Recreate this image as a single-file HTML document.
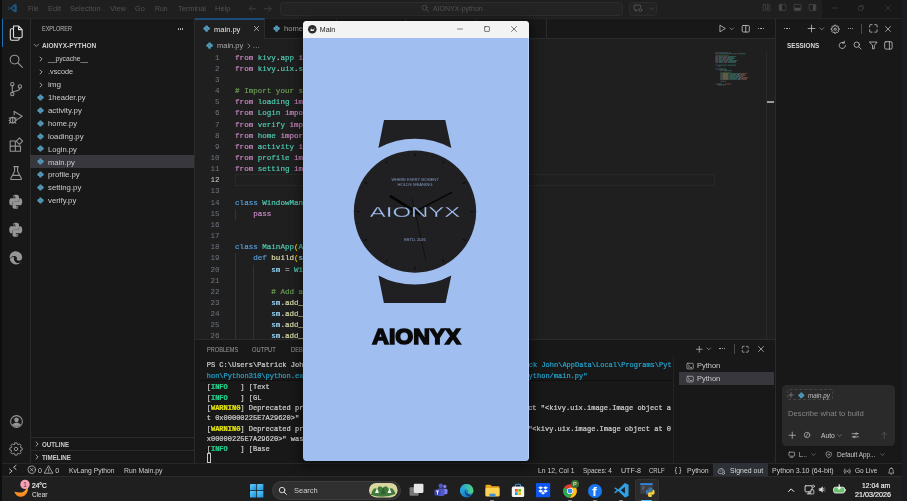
<!DOCTYPE html>
<html lang="en"><head><meta charset="utf-8"><title>main.py - AIONYX-python</title>
<style>
html,body{margin:0;padding:0;background:#1b1b21;}
body{width:907px;height:501px;position:relative;overflow:hidden;font-family:"Liberation Sans",sans-serif;font-size:7.6px;color:#ccc;line-height:1;}
div,span,svg{position:absolute;box-sizing:border-box;white-space:pre;}
svg{overflow:visible}
.t{line-height:13px;height:13px;}
.mono{font-family:"Liberation Mono",monospace;}
.ui{color:#cccccc}
.dim{color:#525252}
.b{font-weight:bold}
.ic{stroke:#c8c8c8;fill:none;stroke-width:1;stroke-linecap:round;stroke-linejoin:round}
.ab svg{stroke:#868686;fill:none;stroke-width:1.5;stroke-linejoin:round;stroke-linecap:round}
/* code colours */
.k{color:#c586c0}.m{color:#4ec9b0}.c{color:#6a9955}.kw{color:#569cd6}.f{color:#dcdcaa}.v{color:#9cdcfe}.p{color:#d4d4d4}.g{color:#ffd700}
.code{-webkit-text-stroke:0.2px;font-family:"Liberation Mono",monospace;font-size:7.55px;line-height:11.15px;height:11.15px;left:40.1px;color:#d4d4d4}
.ln{font-family:"Liberation Mono",monospace;font-size:7.55px;line-height:11.15px;height:11.15px;left:0;width:24.5px;text-align:right;color:#6e7681}
.term{-webkit-text-stroke:0.22px;font-family:"Liberation Mono",monospace;font-size:7px;line-height:10.3px;height:10.3px;color:#cccccc}
.cy{color:#26a0c8}.gr{color:#23d18b;font-weight:bold}.ye{color:#e5e510;font-weight:bold}
</style></head>
<body>
<div id="screen" style="left:0;top:0;width:907px;height:501px;will-change:transform">
<div class="" style="left:0px;top:0px;width:2px;height:501px;background:#0e0e0e;"></div>
<div class="" style="left:902px;top:0px;width:5px;height:501px;background:#1b1b22;"></div>
<div class="" style="left:2px;top:0px;width:900px;height:476px;background:#181818;"></div>
<div class="" style="left:2px;top:0px;width:820px;height:18.5px;background:#1f1f1f;"></div>
<div class="" style="left:2px;top:18px;width:900px;height:1px;background:#252525;"></div>
<svg class="" style="left:7.10px;top:2.50px;width:10.6px;height:10.6px;" viewBox="0 0 16 16"><path d="M11.5 1.5 L5 7.6 L2.3 5.5 L1.3 6 L3.8 8 L1.3 10 L2.3 10.5 L5 8.4 L11.5 14.5 L14.7 13 V3 Z M11.5 5 V11 L7.6 8 Z" fill="#1b5886" stroke="none" fill-rule="evenodd"/></svg>
<span id="t0" class="dim" style="left:27.5px;top:2.10px;line-height:13px;height:13px;font-size:7.7px;transform-origin:0 50%;transform:scaleX(0.8716);">File</span>
<span id="t1" class="dim" style="left:47.8px;top:2.10px;line-height:13px;height:13px;font-size:7.7px;transform-origin:0 50%;transform:scaleX(0.9811);">Edit</span>
<span id="t2" class="dim" style="left:70.3px;top:2.10px;line-height:13px;height:13px;font-size:7.7px;transform-origin:0 50%;transform:scaleX(0.9676);">Selection</span>
<span id="t3" class="dim" style="left:110.1px;top:2.10px;line-height:13px;height:13px;font-size:7.7px;transform-origin:0 50%;transform:scaleX(0.9558);">View</span>
<span id="t4" class="dim" style="left:135.4px;top:2.10px;line-height:13px;height:13px;font-size:7.7px;transform-origin:0 50%;transform:scaleX(0.9449);">Go</span>
<span id="t5" class="dim" style="left:154.7px;top:2.10px;line-height:13px;height:13px;font-size:7.7px;transform-origin:0 50%;transform:scaleX(0.8859);">Run</span>
<span id="t6" class="dim" style="left:177.7px;top:2.10px;line-height:13px;height:13px;font-size:7.7px;transform-origin:0 50%;transform:scaleX(0.9634);">Terminal</span>
<span id="t7" class="dim" style="left:214.5px;top:2.10px;line-height:13px;height:13px;font-size:7.7px;transform-origin:0 50%;transform:scaleX(0.9802);">Help</span>
<svg class="ic" style="left:247.90px;top:3.60px;width:9.6px;height:9.6px;" viewBox="0 0 16 16"><path d="M13.500 8 H2.500 M7 3.500 L2.500 8 L7 12.500" stroke="#484848" stroke-width="1.200"/></svg>
<svg class="ic" style="left:263.20px;top:3.60px;width:9.6px;height:9.6px;" viewBox="0 0 16 16"><path d="M2.500 8 H13.500 M9 3.500 L13.500 8 L9 12.500" stroke="#484848" stroke-width="1.200"/></svg>
<div class="" style="left:280px;top:2px;width:343px;height:13.5px;background:#232323;border:0.8px solid #2c2c2c;border-radius:3.5px;"></div>
<svg class="ic" style="left:421.30px;top:3.90px;width:8.6px;height:8.6px;" viewBox="0 0 16 16"><circle cx="6.800" cy="6.800" r="4.400" stroke="#5a5a5a" stroke-width="1.200"/><path d="M10.100 10.100 L14.200 14.200" stroke="#5a5a5a" stroke-width="1.200"/></svg>
<span id="t8" class="dim" style="left:433px;top:2.00px;line-height:13px;height:13px;font-size:7.6px;transform-origin:0 50%;transform:scaleX(0.9198);">AIONYX-python</span>
<div class="" style="left:629px;top:2px;width:28.2px;height:13.5px;background:#232323;border:0.8px solid #2c2c2c;border-radius:3.5px;"></div>
<svg class="ic" style="left:632.60px;top:3.20px;width:10.2px;height:10.2px;" viewBox="0 0 16 16"><path d="M3 3.2 H10.5 Q12 3.2 12 4.7 V7 M3 3.2 Q1.8 3.2 1.8 4.5 V9.5 Q1.8 10.8 3 10.8 H4 V13 L6.5 10.8 H7.5" stroke="#5e5e5e" stroke-width="1.3"/><circle cx="11.5" cy="11" r="2.3" stroke="#5e5e5e" stroke-width="1.2"/></svg>
<svg class="ic" style="left:648.85px;top:5.75px;width:5.5px;height:5.5px;" viewBox="0 0 16 16"><path d="M2.5 5.5 L8 11 L13.5 5.5" stroke="#5a5a5a" stroke-width="1.6"/></svg>
<svg class="ic" style="left:762.00px;top:3.10px;width:9px;height:9px;" viewBox="0 0 16 16"><rect x="2" y="2.5" width="4.5" height="11" rx="1" stroke="#4a4a4a" stroke-width="1.2"/><rect x="9" y="2.5" width="5" height="4.5" rx="1" stroke="#4a4a4a" stroke-width="1.2"/><rect x="9" y="9" width="5" height="4.5" rx="1" stroke="#4a4a4a" stroke-width="1.2"/></svg>
<svg class="ic" style="left:777.60px;top:3.10px;width:9px;height:9px;" viewBox="0 0 16 16"><rect x="2" y="2.5" width="12" height="11" rx="1.5" stroke="#4a4a4a" stroke-width="1.2"/><rect x="2.6" y="3" width="4.4" height="10" fill="#4a4a4a" stroke="none"/></svg>
<svg class="ic" style="left:792.50px;top:3.10px;width:9px;height:9px;" viewBox="0 0 16 16"><rect x="2" y="2.5" width="12" height="11" rx="1.5" stroke="#4a4a4a" stroke-width="1.2"/><rect x="2.6" y="8.5" width="10.8" height="4.5" fill="#4a4a4a" stroke="none"/></svg>
<svg class="ic" style="left:807.80px;top:3.10px;width:9px;height:9px;" viewBox="0 0 16 16"><rect x="2" y="2.5" width="12" height="11" rx="1.5" stroke="#4a4a4a" stroke-width="1.2"/><rect x="9" y="3" width="4.4" height="10" fill="#4a4a4a" stroke="none"/></svg>
<svg class="ic" style="left:831.30px;top:3.50px;width:8px;height:8px;" viewBox="0 0 16 16"><path d="M2.5 8 H13.5" stroke="#4a4a4a" stroke-width="1.1"/></svg>
<svg class="ic" style="left:857.30px;top:3.80px;width:8px;height:8px;" viewBox="0 0 16 16"><rect x="3" y="5" width="8" height="8" rx="1.5" stroke="#4a4a4a" stroke-width="1.1"/><path d="M5.5 5 V4.3 Q5.5 3 7 3 H11.5 Q13.3 3 13.3 4.6 V9 Q13.3 10.5 12 10.5 H11" stroke="#4a4a4a" stroke-width="1.1"/></svg>
<svg class="ic" style="left:884.40px;top:3.80px;width:8px;height:8px;" viewBox="0 0 16 16"><path d="M3 3 L13 13 M13 3 L3 13" stroke="#4a4a4a" stroke-width="1.1"/></svg>
<div class="" style="left:30px;top:19px;width:1px;height:444px;background:#2b2b2b;"></div>
<div class="" style="left:2px;top:18.8px;width:1.2px;height:28.2px;background:#1f6fb5;"></div>
<svg style="left:7.00px;top:23.70px;width:18.2px;height:18.2px;stroke:#dedede;fill:none;stroke-width:1.45;stroke-linejoin:round;stroke-linecap:round" viewBox="0 0 24 24"><path d="M8.6 2.6 H15.2 L20 7.4 V16.6 Q20 18.2 18.4 18.2 H10.2 Q8.6 18.2 8.6 16.6 Z M15.2 2.6 V7.4 H20"/><path d="M8.6 6.2 H6 Q4.4 6.2 4.4 7.8 V19.6 Q4.4 21.4 6 21.4 H14.4 Q16 21.4 16 19.8 V18.2"/></svg>
<svg style="left:7.00px;top:51.50px;width:18.2px;height:18.2px;stroke:#959595;fill:none;stroke-width:1.45;stroke-linejoin:round;stroke-linecap:round" viewBox="0 0 24 24"><circle cx="10" cy="10" r="5.8"/><path d="M14.2 14.2 L20.3 20.3"/></svg>
<svg style="left:7.00px;top:79.80px;width:18.2px;height:18.2px;stroke:#959595;fill:none;stroke-width:1.45;stroke-linejoin:round;stroke-linecap:round" viewBox="0 0 24 24"><circle cx="7" cy="5.5" r="2.2"/><circle cx="7" cy="18.5" r="2.2"/><circle cx="17" cy="8.5" r="2.2"/><path d="M7 7.7 V16.3 M17 10.7 Q17 14 12 14.5 Q7.5 15 7 16.3"/></svg>
<svg style="left:7.00px;top:107.90px;width:18.2px;height:18.2px;stroke:#959595;fill:none;stroke-width:1.45;stroke-linejoin:round;stroke-linecap:round" viewBox="0 0 24 24"><path d="M9.5 4.5 L20 11 L12 16"/><path d="M9.5 4.5 V9"/><circle cx="7.5" cy="16" r="3.6"/><path d="M7.5 12.4 V19.6 M3 13 L4.6 14.2 M12 13 L10.4 14.2 M2.8 16.5 H3.9 M12.2 16.5 H11.1 M3.3 20 L4.8 18.6 M11.7 20 L10.2 18.6"/></svg>
<svg style="left:7.00px;top:136.30px;width:18.2px;height:18.2px;stroke:#959595;fill:none;stroke-width:1.45;stroke-linejoin:round;stroke-linecap:round" viewBox="0 0 24 24"><path d="M4.2 6.6 H11 V13.4 H17.8 V20.2 H4.2 Z M4.2 13.4 H11 V20.2"/><path d="M16.4 2.6 L20.6 6.8 L16.4 11 L12.2 6.8 Z"/></svg>
<svg style="left:7.00px;top:164.40px;width:18.2px;height:18.2px;stroke:#959595;fill:none;stroke-width:1.45;stroke-linejoin:round;stroke-linecap:round" viewBox="0 0 24 24"><path d="M9 3.5 H15 M10 3.5 V9.5 L5 19 Q4.5 20.5 6 20.5 H18 Q19.5 20.5 19 19 L14 9.5 V3.5 M7 15 H17"/></svg>
<svg style="left:8.35px;top:193.75px;width:15.5px;height:15.5px;stroke:#959595;fill:none;stroke-width:1.45;stroke-linejoin:round;stroke-linecap:round" viewBox="0 0 24 24"><g stroke="none" fill="#959595"><path d="M11.9 1C8 1 8.3 2.7 8.3 2.7v2.9h3.7v.9H5.2S2 6.1 2 11.9s2.8 5.6 2.8 5.6h1.9v-2.7s-.1-2.8 2.8-2.8h4.8s2.7 0 2.7-2.6V4S17.4 1 11.9 1z"/><path transform="rotate(180 12 12)" d="M11.9 1C8 1 8.3 2.7 8.3 2.7v2.9h3.7v.9H5.2S2 6.1 2 11.9s2.8 5.6 2.8 5.6h1.9v-2.7s-.1-2.8 2.8-2.8h4.8s2.7 0 2.7-2.6V4S17.4 1 11.9 1z"/></g><circle cx="10" cy="3.6" r="0.9" fill="#181818" stroke="none"/><circle cx="14" cy="20.4" r="0.9" fill="#181818" stroke="none"/></svg>
<svg style="left:8.35px;top:221.95px;width:15.5px;height:15.5px;stroke:#959595;fill:none;stroke-width:1.45;stroke-linejoin:round;stroke-linecap:round" viewBox="0 0 24 24"><g stroke="none" fill="#959595"><path d="M11.9 1C8 1 8.3 2.7 8.3 2.7v2.9h3.7v.9H5.2S2 6.1 2 11.9s2.8 5.6 2.8 5.6h1.9v-2.7s-.1-2.8 2.8-2.8h4.8s2.7 0 2.7-2.6V4S17.4 1 11.9 1z"/><path transform="rotate(180 12 12)" d="M11.9 1C8 1 8.3 2.7 8.3 2.7v2.9h3.7v.9H5.2S2 6.1 2 11.9s2.8 5.6 2.8 5.6h1.9v-2.7s-.1-2.8 2.8-2.8h4.8s2.7 0 2.7-2.6V4S17.4 1 11.9 1z"/></g><circle cx="10" cy="3.6" r="0.9" fill="#181818" stroke="none"/><circle cx="14" cy="20.4" r="0.9" fill="#181818" stroke="none"/></svg>
<svg style="left:8.35px;top:250.05px;width:15.5px;height:15.5px;stroke:#959595;fill:none;stroke-width:1.45;stroke-linejoin:round;stroke-linecap:round" viewBox="0 0 24 24"><g stroke="none"><path fill="#959595" d="M12 2 A10 10 0 0 1 22 11.5 C22 15 19 16.5 16.5 16.5 C14 16.500 12.800 15.500 13.500 14.500 C14.500 13 14 10.500 11.500 9.500 C8 8.200 4.500 10.500 3 13.500 C1 8 5.500 2 12 2 Z"/><path fill="#959595" d="M3 14.5 C4 11.500 7 10 9.500 11 C8.5 13 9 17 12.500 19.500 C15 21 18.500 20.500 20.800 17.500 C18 23 10 24 5.500 19.500 C4 18 3.200 16.300 3 14.500 Z"/></g></svg>
<svg style="left:7.60px;top:412.70px;width:17px;height:17px;stroke:#959595;fill:none;stroke-width:1.45;stroke-linejoin:round;stroke-linecap:round" viewBox="0 0 24 24"><circle cx="12" cy="12" r="8.3"/><circle cx="12" cy="9.700" r="2.5" fill="#959595"/><path d="M6.800 16.500 Q12 12 17.200 16.500 Q12 21 6.800 16.500 Z" fill="#959595"/></svg>
<svg style="left:8.10px;top:441.40px;width:16px;height:16px;stroke:#959595;fill:none;stroke-width:1.45;stroke-linejoin:round;stroke-linecap:round" viewBox="0 0 24 24"><circle cx="12" cy="12" r="2.600"/><path d="M10.41 2.74 L13.59 2.74 L14.23 5.26 L15.19 5.66 L17.43 4.32 L19.68 6.57 L18.34 8.81 L18.74 9.77 L21.26 10.41 L21.26 13.59 L18.74 14.23 L18.34 15.19 L19.68 17.43 L17.43 19.68 L15.19 18.34 L14.23 18.74 L13.59 21.26 L10.41 21.26 L9.77 18.74 L8.81 18.34 L6.57 19.68 L4.32 17.43 L5.66 15.19 L5.26 14.23 L2.74 13.59 L2.74 10.41 L5.26 9.77 L5.66 8.81 L4.32 6.57 L6.57 4.32 L8.81 5.66 L9.77 5.26 Z"/></svg>
<div class="" style="left:194.3px;top:18.8px;width:0.8px;height:444.4px;background:#2b2b2b;"></div>
<span id="t9" class="ui" style="left:41.8px;top:22.20px;line-height:13px;height:13px;font-size:6.6px;transform-origin:0 50%;transform:scaleX(0.8351);color:#bbbbbb;">EXPLORER</span>
<div style="left:177.55px;top:28.35px;width:1.3px;height:1.3px;border-radius:50%;background:#c8c8c8"></div>
<div style="left:179.85px;top:28.35px;width:1.3px;height:1.3px;border-radius:50%;background:#c8c8c8"></div>
<div style="left:182.15px;top:28.35px;width:1.3px;height:1.3px;border-radius:50%;background:#c8c8c8"></div>
<svg class="ic" style="left:32.75px;top:42.35px;width:6.5px;height:6.5px;" viewBox="0 0 16 16"><path d="M2.5 5.5 L8 11 L13.5 5.5" stroke="#c5c5c5" stroke-width="1.6"/></svg>
<span id="t10" class="ui b" style="left:42px;top:39.30px;line-height:13px;height:13px;font-size:6.6px;transform-origin:0 50%;transform:scaleX(0.9881);color:#cfcfcf">AIONYX-PYTHON</span>
<svg class="ic" style="left:38.20px;top:55.90px;width:6px;height:6px;" viewBox="0 0 16 16"><path d="M5.5 2.5 L11 8 L5.5 13.5" stroke="#cccccc" stroke-width="2"/></svg>
<span id="t11" class="ui" style="left:47.5px;top:52.40px;line-height:13px;height:13px;font-size:7.65px;transform-origin:0 50%;transform:scaleX(0.8819);">__pycache__</span>
<svg class="ic" style="left:38.20px;top:68.79px;width:6px;height:6px;" viewBox="0 0 16 16"><path d="M5.5 2.5 L11 8 L5.5 13.5" stroke="#cccccc" stroke-width="2"/></svg>
<span id="t12" class="ui" style="left:47.5px;top:65.29px;line-height:13px;height:13px;font-size:7.65px;transform-origin:0 50%;transform:scaleX(0.9528);">.vscode</span>
<svg class="ic" style="left:38.20px;top:81.68px;width:6px;height:6px;" viewBox="0 0 16 16"><path d="M5.5 2.5 L11 8 L5.5 13.5" stroke="#cccccc" stroke-width="2"/></svg>
<span id="t13" class="ui" style="left:47.5px;top:78.18px;line-height:13px;height:13px;font-size:7.65px;transform-origin:0 50%;transform:scaleX(1.0640);">img</span>
<svg style="left:36.70px;top:93.87px;width:7px;height:7px" viewBox="0 0 24 24"><g fill="#519aba"><rect x="7" y="1.5" width="10" height="21" rx="3.6"/><rect x="1.5" y="7" width="21" height="10" rx="3.6"/></g><path d="M7 11.300 H12.700 M11.300 12.700 H17" stroke="#1a1a1a" stroke-width="0.900" fill="none" opacity="0.55"/><circle cx="10" cy="4.600" r="1.100" fill="#1a1a1a" opacity="0.7"/><circle cx="14" cy="19.400" r="1.100" fill="#1a1a1a" opacity="0.7"/></svg>
<span id="t14" class="ui" style="left:47.5px;top:91.07px;line-height:13px;height:13px;font-size:7.65px;transform-origin:0 50%;transform:scaleX(0.9944);">1header.py</span>
<svg style="left:36.70px;top:106.76px;width:7px;height:7px" viewBox="0 0 24 24"><g fill="#519aba"><rect x="7" y="1.5" width="10" height="21" rx="3.6"/><rect x="1.5" y="7" width="21" height="10" rx="3.6"/></g><path d="M7 11.300 H12.700 M11.300 12.700 H17" stroke="#1a1a1a" stroke-width="0.900" fill="none" opacity="0.55"/><circle cx="10" cy="4.600" r="1.100" fill="#1a1a1a" opacity="0.7"/><circle cx="14" cy="19.400" r="1.100" fill="#1a1a1a" opacity="0.7"/></svg>
<span id="t15" class="ui" style="left:47.5px;top:103.96px;line-height:13px;height:13px;font-size:7.65px;transform-origin:0 50%;transform:scaleX(1.0247);">activity.py</span>
<svg style="left:36.70px;top:119.65px;width:7px;height:7px" viewBox="0 0 24 24"><g fill="#519aba"><rect x="7" y="1.5" width="10" height="21" rx="3.6"/><rect x="1.5" y="7" width="21" height="10" rx="3.6"/></g><path d="M7 11.300 H12.700 M11.300 12.700 H17" stroke="#1a1a1a" stroke-width="0.900" fill="none" opacity="0.55"/><circle cx="10" cy="4.600" r="1.100" fill="#1a1a1a" opacity="0.7"/><circle cx="14" cy="19.400" r="1.100" fill="#1a1a1a" opacity="0.7"/></svg>
<span id="t16" class="ui" style="left:47.5px;top:116.85px;line-height:13px;height:13px;font-size:7.65px;transform-origin:0 50%;transform:scaleX(0.9893);">home.py</span>
<svg style="left:36.70px;top:132.54px;width:7px;height:7px" viewBox="0 0 24 24"><g fill="#519aba"><rect x="7" y="1.5" width="10" height="21" rx="3.6"/><rect x="1.5" y="7" width="21" height="10" rx="3.6"/></g><path d="M7 11.300 H12.700 M11.300 12.700 H17" stroke="#1a1a1a" stroke-width="0.900" fill="none" opacity="0.55"/><circle cx="10" cy="4.600" r="1.100" fill="#1a1a1a" opacity="0.7"/><circle cx="14" cy="19.400" r="1.100" fill="#1a1a1a" opacity="0.7"/></svg>
<span id="t17" class="ui" style="left:47.5px;top:129.74px;line-height:13px;height:13px;font-size:7.65px;transform-origin:0 50%;transform:scaleX(1.0217);">loading.py</span>
<svg style="left:36.70px;top:145.43px;width:7px;height:7px" viewBox="0 0 24 24"><g fill="#519aba"><rect x="7" y="1.5" width="10" height="21" rx="3.6"/><rect x="1.5" y="7" width="21" height="10" rx="3.6"/></g><path d="M7 11.300 H12.700 M11.300 12.700 H17" stroke="#1a1a1a" stroke-width="0.900" fill="none" opacity="0.55"/><circle cx="10" cy="4.600" r="1.100" fill="#1a1a1a" opacity="0.7"/><circle cx="14" cy="19.400" r="1.100" fill="#1a1a1a" opacity="0.7"/></svg>
<span id="t18" class="ui" style="left:47.5px;top:142.63px;line-height:13px;height:13px;font-size:7.65px;transform-origin:0 50%;transform:scaleX(0.9969);">Login.py</span>
<div class="" style="left:30.1px;top:155px;width:164.2px;height:13px;background:#37373d;"></div>
<svg style="left:36.70px;top:158.32px;width:7px;height:7px" viewBox="0 0 24 24"><g fill="#519aba"><rect x="7" y="1.5" width="10" height="21" rx="3.6"/><rect x="1.5" y="7" width="21" height="10" rx="3.6"/></g><path d="M7 11.300 H12.700 M11.300 12.700 H17" stroke="#1a1a1a" stroke-width="0.900" fill="none" opacity="0.55"/><circle cx="10" cy="4.600" r="1.100" fill="#1a1a1a" opacity="0.7"/><circle cx="14" cy="19.400" r="1.100" fill="#1a1a1a" opacity="0.7"/></svg>
<span id="t19" class="ui" style="left:47.5px;top:155.52px;line-height:13px;height:13px;font-size:7.65px;transform-origin:0 50%;transform:scaleX(1.0013);">main.py</span>
<svg style="left:36.70px;top:171.21px;width:7px;height:7px" viewBox="0 0 24 24"><g fill="#519aba"><rect x="7" y="1.5" width="10" height="21" rx="3.6"/><rect x="1.5" y="7" width="21" height="10" rx="3.6"/></g><path d="M7 11.300 H12.700 M11.300 12.700 H17" stroke="#1a1a1a" stroke-width="0.900" fill="none" opacity="0.55"/><circle cx="10" cy="4.600" r="1.100" fill="#1a1a1a" opacity="0.7"/><circle cx="14" cy="19.400" r="1.100" fill="#1a1a1a" opacity="0.7"/></svg>
<span id="t20" class="ui" style="left:47.5px;top:168.41px;line-height:13px;height:13px;font-size:7.65px;transform-origin:0 50%;transform:scaleX(1.0253);">profile.py</span>
<svg style="left:36.70px;top:184.10px;width:7px;height:7px" viewBox="0 0 24 24"><g fill="#519aba"><rect x="7" y="1.5" width="10" height="21" rx="3.6"/><rect x="1.5" y="7" width="21" height="10" rx="3.6"/></g><path d="M7 11.300 H12.700 M11.300 12.700 H17" stroke="#1a1a1a" stroke-width="0.900" fill="none" opacity="0.55"/><circle cx="10" cy="4.600" r="1.100" fill="#1a1a1a" opacity="0.7"/><circle cx="14" cy="19.400" r="1.100" fill="#1a1a1a" opacity="0.7"/></svg>
<span id="t21" class="ui" style="left:47.5px;top:181.30px;line-height:13px;height:13px;font-size:7.65px;transform-origin:0 50%;transform:scaleX(1.0178);">setting.py</span>
<svg style="left:36.70px;top:196.99px;width:7px;height:7px" viewBox="0 0 24 24"><g fill="#519aba"><rect x="7" y="1.5" width="10" height="21" rx="3.6"/><rect x="1.5" y="7" width="21" height="10" rx="3.6"/></g><path d="M7 11.300 H12.700 M11.300 12.700 H17" stroke="#1a1a1a" stroke-width="0.900" fill="none" opacity="0.55"/><circle cx="10" cy="4.600" r="1.100" fill="#1a1a1a" opacity="0.7"/><circle cx="14" cy="19.400" r="1.100" fill="#1a1a1a" opacity="0.7"/></svg>
<span id="t22" class="ui" style="left:47.5px;top:194.19px;line-height:13px;height:13px;font-size:7.65px;transform-origin:0 50%;transform:scaleX(1.0147);">verify.py</span>
<div class="" style="left:30.1px;top:437.4px;width:164.2px;height:0.8px;background:#2b2b2b;"></div>
<div class="" style="left:30.1px;top:450.1px;width:164.2px;height:0.8px;background:#2b2b2b;"></div>
<svg class="ic" style="left:33.50px;top:441.30px;width:6px;height:6px;" viewBox="0 0 16 16"><path d="M5.5 2.5 L11 8 L5.5 13.5" stroke="#cccccc" stroke-width="2"/></svg>
<span id="t23" class="ui b" style="left:42.1px;top:437.90px;line-height:13px;height:13px;font-size:6.6px;transform-origin:0 50%;transform:scaleX(0.9325);">OUTLINE</span>
<svg class="ic" style="left:33.50px;top:454.10px;width:6px;height:6px;" viewBox="0 0 16 16"><path d="M5.5 2.5 L11 8 L5.5 13.5" stroke="#cccccc" stroke-width="2"/></svg>
<span id="t24" class="ui b" style="left:42.1px;top:450.70px;line-height:13px;height:13px;font-size:6.6px;transform-origin:0 50%;transform:scaleX(0.9421);">TIMELINE</span>
<div class="" style="left:195px;top:19px;width:580px;height:320px;background:#1f1f1f;"></div>
<div class="" style="left:195px;top:19px;width:580px;height:19px;background:#181818;"></div>
<div class="" style="left:195px;top:38px;width:580px;height:1px;background:#2b2b2b;"></div>
<div class="" style="left:195px;top:18px;width:70px;height:21px;background:#1f1f1f;border-top:2px solid #194c76;border-right:1px solid #2b2b2b;"></div>
<svg style="left:202.60px;top:25.10px;width:7.2px;height:7.2px" viewBox="0 0 24 24"><g fill="#519aba"><rect x="7" y="1.5" width="10" height="21" rx="3.6"/><rect x="1.5" y="7" width="21" height="10" rx="3.6"/></g><path d="M7 11.300 H12.700 M11.300 12.700 H17" stroke="#1a1a1a" stroke-width="0.900" fill="none" opacity="0.55"/><circle cx="10" cy="4.600" r="1.100" fill="#1a1a1a" opacity="0.7"/><circle cx="14" cy="19.400" r="1.100" fill="#1a1a1a" opacity="0.7"/></svg>
<span id="t25" class="ui" style="left:214px;top:22.90px;line-height:13px;height:13px;font-size:7.65px;transform-origin:0 50%;transform:scaleX(0.9863);color:#e6e6e6">main.py</span>
<svg class="ic" style="left:253.10px;top:25.30px;width:7px;height:7px;" viewBox="0 0 16 16"><path d="M3 3 L13 13 M13 3 L3 13" stroke="#e0e0e0" stroke-width="1.5"/></svg>
<svg style="left:272.90px;top:25.10px;width:7.2px;height:7.2px" viewBox="0 0 24 24"><g fill="#519aba"><rect x="7" y="1.5" width="10" height="21" rx="3.6"/><rect x="1.5" y="7" width="21" height="10" rx="3.6"/></g><path d="M7 11.300 H12.700 M11.300 12.700 H17" stroke="#1a1a1a" stroke-width="0.900" fill="none" opacity="0.55"/><circle cx="10" cy="4.600" r="1.100" fill="#1a1a1a" opacity="0.7"/><circle cx="14" cy="19.400" r="1.100" fill="#1a1a1a" opacity="0.7"/></svg>
<span id="t26" class="ui" style="left:283.9px;top:22.40px;line-height:13px;height:13px;font-size:7.65px;color:#9d9d9d">home.py</span>
<div class="" style="left:335.5px;top:19px;width:0.8px;height:18.6px;background:#2b2b2b;"></div>
<div class="" style="left:405px;top:19px;width:0.8px;height:18.6px;background:#2b2b2b;"></div>
<div class="" style="left:475.5px;top:19px;width:0.8px;height:18.6px;background:#2b2b2b;"></div>
<div class="" style="left:546px;top:19px;width:0.8px;height:18.6px;background:#2b2b2b;"></div>
<svg style="left:343.40px;top:25.10px;width:7.2px;height:7.2px" viewBox="0 0 24 24"><g fill="#519aba"><rect x="7" y="1.5" width="10" height="21" rx="3.6"/><rect x="1.5" y="7" width="21" height="10" rx="3.6"/></g><path d="M7 11.300 H12.700 M11.300 12.700 H17" stroke="#1a1a1a" stroke-width="0.900" fill="none" opacity="0.55"/><circle cx="10" cy="4.600" r="1.100" fill="#1a1a1a" opacity="0.7"/><circle cx="14" cy="19.400" r="1.100" fill="#1a1a1a" opacity="0.7"/></svg>
<span id="t27" class="ui" style="left:354.4px;top:22.40px;line-height:13px;height:13px;font-size:7.65px;color:#9d9d9d">Login.py</span>
<svg style="left:412.40px;top:25.10px;width:7.2px;height:7.2px" viewBox="0 0 24 24"><g fill="#519aba"><rect x="7" y="1.5" width="10" height="21" rx="3.6"/><rect x="1.5" y="7" width="21" height="10" rx="3.6"/></g><path d="M7 11.300 H12.700 M11.300 12.700 H17" stroke="#1a1a1a" stroke-width="0.900" fill="none" opacity="0.55"/><circle cx="10" cy="4.600" r="1.100" fill="#1a1a1a" opacity="0.7"/><circle cx="14" cy="19.400" r="1.100" fill="#1a1a1a" opacity="0.7"/></svg>
<span id="t28" class="ui" style="left:423.4px;top:22.40px;line-height:13px;height:13px;font-size:7.65px;color:#9d9d9d">loading.py</span>
<svg style="left:482.40px;top:25.10px;width:7.2px;height:7.2px" viewBox="0 0 24 24"><g fill="#519aba"><rect x="7" y="1.5" width="10" height="21" rx="3.6"/><rect x="1.5" y="7" width="21" height="10" rx="3.6"/></g><path d="M7 11.300 H12.700 M11.300 12.700 H17" stroke="#1a1a1a" stroke-width="0.900" fill="none" opacity="0.55"/><circle cx="10" cy="4.600" r="1.100" fill="#1a1a1a" opacity="0.7"/><circle cx="14" cy="19.400" r="1.100" fill="#1a1a1a" opacity="0.7"/></svg>
<span id="t29" class="ui" style="left:493.4px;top:22.40px;line-height:13px;height:13px;font-size:7.65px;color:#9d9d9d">setting.py</span>
<svg class="ic" style="left:718.10px;top:24.30px;width:9px;height:9px;" viewBox="0 0 16 16"><path d="M4 2.5 L13 8 L4 13.500 Z" stroke="#d0d0d0" stroke-width="1.3"/></svg>
<svg class="ic" style="left:729.45px;top:26.25px;width:5.5px;height:5.5px;" viewBox="0 0 16 16"><path d="M2.5 5.5 L8 11 L13.5 5.5" stroke="#c5c5c5" stroke-width="1.6"/></svg>
<svg class="ic" style="left:740.75px;top:24.05px;width:9.5px;height:9.5px;" viewBox="0 0 16 16"><rect x="2" y="2.5" width="12" height="11" rx="1.800" stroke="#d0d0d0" stroke-width="1.3"/><path d="M8 2.500 V13.500" stroke="#d0d0d0" stroke-width="1.3"/></svg>
<div style="left:758.05px;top:28.15px;width:1.3px;height:1.3px;border-radius:50%;background:#c8c8c8"></div>
<div style="left:760.35px;top:28.15px;width:1.3px;height:1.3px;border-radius:50%;background:#c8c8c8"></div>
<div style="left:762.65px;top:28.15px;width:1.3px;height:1.3px;border-radius:50%;background:#c8c8c8"></div>
<svg style="left:206.20px;top:42.00px;width:7.2px;height:7.2px" viewBox="0 0 24 24"><g fill="#519aba"><rect x="7" y="1.5" width="10" height="21" rx="3.6"/><rect x="1.5" y="7" width="21" height="10" rx="3.6"/></g><path d="M7 11.300 H12.700 M11.300 12.700 H17" stroke="#1a1a1a" stroke-width="0.900" fill="none" opacity="0.55"/><circle cx="10" cy="4.600" r="1.100" fill="#1a1a1a" opacity="0.7"/><circle cx="14" cy="19.400" r="1.100" fill="#1a1a1a" opacity="0.7"/></svg>
<span id="t30" class="ui" style="left:217.2px;top:39.30px;line-height:13px;height:13px;font-size:7.65px;transform-origin:0 50%;transform:scaleX(0.9826);color:#a9a9a9">main.py</span>
<svg class="ic" style="left:245.60px;top:42.90px;width:6px;height:6px;" viewBox="0 0 16 16"><path d="M5.5 2.5 L11 8 L5.5 13.5" stroke="#a0a0a0" stroke-width="2"/></svg>
<span id="t31" class="ui" style="left:252.6px;top:39.10px;line-height:13px;height:13px;font-size:7.65px;color:#a9a9a9">…</span>
<div id="code" style="left:195px;top:52.7px;width:579.4px;height:286.3px;overflow:hidden">
<div style="left:39.6px;top:121.3px;width:480px;height:12px;border:1px solid #282828"></div>
<div style="left:39.6px;top:156.10px;width:0.7px;height:11.15px;background:#333"></div>
<div style="left:39.6px;top:200.70px;width:0.7px;height:89.20px;background:#333"></div>
<div style="left:57.7px;top:211.85px;width:0.7px;height:78.05px;background:#333"></div>
<span class="ln" style="top:0.00px;color:#6e7681">1</span>
<span class="code" style="top:0.00px"><span class="k" style="position:static">from</span> <span class="m" style="position:static">kivy</span>.<span class="m" style="position:static">app</span> <span class="k" style="position:static">import</span> <span class="m" style="position:static">App</span></span>
<span class="ln" style="top:11.15px;color:#6e7681">2</span>
<span class="code" style="top:11.15px"><span class="k" style="position:static">from</span> <span class="m" style="position:static">kivy</span>.<span class="m" style="position:static">uix</span>.<span class="m" style="position:static">screenmanager</span> <span class="k" style="position:static">import</span> <span class="m" style="position:static">ScreenManager</span></span>
<span class="ln" style="top:22.30px;color:#6e7681">3</span>
<span class="ln" style="top:33.45px;color:#6e7681">4</span>
<span class="code" style="top:33.45px"><span class="c" style="position:static"># Import your screens</span></span>
<span class="ln" style="top:44.60px;color:#6e7681">5</span>
<span class="code" style="top:44.60px"><span class="k" style="position:static">from</span> <span class="m" style="position:static">loading</span> <span class="k" style="position:static">import</span> <span class="m" style="position:static">LoadingScreen</span></span>
<span class="ln" style="top:55.75px;color:#6e7681">6</span>
<span class="code" style="top:55.75px"><span class="k" style="position:static">from</span> <span class="m" style="position:static">Login</span> <span class="k" style="position:static">import</span> <span class="m" style="position:static">LoginScreen</span></span>
<span class="ln" style="top:66.90px;color:#6e7681">7</span>
<span class="code" style="top:66.90px"><span class="k" style="position:static">from</span> <span class="m" style="position:static">verify</span> <span class="k" style="position:static">import</span> <span class="m" style="position:static">VerifyScreen</span></span>
<span class="ln" style="top:78.05px;color:#6e7681">8</span>
<span class="code" style="top:78.05px"><span class="k" style="position:static">from</span> <span class="m" style="position:static">home</span> <span class="k" style="position:static">import</span> <span class="m" style="position:static">HomeScreen</span></span>
<span class="ln" style="top:89.20px;color:#6e7681">9</span>
<span class="code" style="top:89.20px"><span class="k" style="position:static">from</span> <span class="m" style="position:static">activity</span> <span class="k" style="position:static">import</span> <span class="m" style="position:static">ActivityScreen</span></span>
<span class="ln" style="top:100.35px;color:#6e7681">10</span>
<span class="code" style="top:100.35px"><span class="k" style="position:static">from</span> <span class="m" style="position:static">profile</span> <span class="k" style="position:static">import</span> <span class="m" style="position:static">ProfileScreen</span></span>
<span class="ln" style="top:111.50px;color:#6e7681">11</span>
<span class="code" style="top:111.50px"><span class="k" style="position:static">from</span> <span class="m" style="position:static">setting</span> <span class="k" style="position:static">import</span> <span class="m" style="position:static">SettingScreen</span></span>
<span class="ln" style="top:122.65px;color:#cccccc">12</span>
<span class="ln" style="top:133.80px;color:#6e7681">13</span>
<span class="ln" style="top:144.95px;color:#6e7681">14</span>
<span class="code" style="top:144.95px"><span class="kw" style="position:static">class</span> <span class="m" style="position:static">WindowManager</span><span class="g" style="position:static">(</span><span class="m" style="position:static">ScreenManager</span><span class="g" style="position:static">)</span>:</span>
<span class="ln" style="top:156.10px;color:#6e7681">15</span>
<span class="code" style="top:156.10px">    <span class="k" style="position:static">pass</span></span>
<span class="ln" style="top:167.25px;color:#6e7681">16</span>
<span class="ln" style="top:178.40px;color:#6e7681">17</span>
<span class="ln" style="top:189.55px;color:#6e7681">18</span>
<span class="code" style="top:189.55px"><span class="kw" style="position:static">class</span> <span class="m" style="position:static">MainApp</span><span class="g" style="position:static">(</span><span class="m" style="position:static">App</span><span class="g" style="position:static">)</span>:</span>
<span class="ln" style="top:200.70px;color:#6e7681">19</span>
<span class="code" style="top:200.70px">    <span class="kw" style="position:static">def</span> <span class="f" style="position:static">build</span><span class="g" style="position:static">(</span><span class="v" style="position:static">self</span><span class="g" style="position:static">)</span>:</span>
<span class="ln" style="top:211.85px;color:#6e7681">20</span>
<span class="code" style="top:211.85px">        <span class="v" style="position:static">sm</span> = <span class="m" style="position:static">WindowManager</span><span class="k" style="position:static">()</span></span>
<span class="ln" style="top:223.00px;color:#6e7681">21</span>
<span class="ln" style="top:234.15px;color:#6e7681">22</span>
<span class="code" style="top:234.15px">        <span class="c" style="position:static"># Add all screens</span></span>
<span class="ln" style="top:245.30px;color:#6e7681">23</span>
<span class="code" style="top:245.30px">        <span class="v" style="position:static">sm</span>.<span class="f" style="position:static">add_widget</span><span class="k" style="position:static">(</span><span class="m" style="position:static">LoadingScreen</span><span class="kw" style="position:static">(</span><span class="v" style="position:static">name</span>=<span style="position:static;color:#ce9178">"loading"</span><span class="kw" style="position:static">)</span><span class="k" style="position:static">)</span></span>
<span class="ln" style="top:256.45px;color:#6e7681">24</span>
<span class="code" style="top:256.45px">        <span class="v" style="position:static">sm</span>.<span class="f" style="position:static">add_widget</span><span class="k" style="position:static">(</span><span class="m" style="position:static">LoginScreen</span><span class="kw" style="position:static">(</span><span class="v" style="position:static">name</span>=<span style="position:static;color:#ce9178">"login"</span><span class="kw" style="position:static">)</span><span class="k" style="position:static">)</span></span>
<span class="ln" style="top:267.60px;color:#6e7681">25</span>
<span class="code" style="top:267.60px">        <span class="v" style="position:static">sm</span>.<span class="f" style="position:static">add_widget</span><span class="k" style="position:static">(</span><span class="m" style="position:static">VerifyScreen</span><span class="kw" style="position:static">(</span><span class="v" style="position:static">name</span>=<span style="position:static;color:#ce9178">"verify"</span><span class="kw" style="position:static">)</span><span class="k" style="position:static">)</span></span>
<span class="ln" style="top:278.75px;color:#6e7681">26</span>
<span class="code" style="top:278.75px">        <span class="v" style="position:static">sm</span>.<span class="f" style="position:static">add_widget</span><span class="k" style="position:static">(</span><span class="m" style="position:static">HomeScreen</span><span class="kw" style="position:static">(</span><span class="v" style="position:static">name</span>=<span style="position:static;color:#ce9178">"home"</span><span class="kw" style="position:static">)</span><span class="k" style="position:static">)</span></span>
</div>
<svg style="left:0;top:0;width:907px;height:120px;opacity:0.72" viewBox="0 0 907 120"><rect x="715.40" y="52.45" width="2.52" height="0.8" fill="#7d5a7b"/><rect x="718.55" y="52.45" width="5.67" height="0.8" fill="#3a8072"/><rect x="724.22" y="52.45" width="3.78" height="0.8" fill="#7d5a7b"/><rect x="728.63" y="52.45" width="1.89" height="0.8" fill="#3a8072"/><rect x="715.40" y="53.40" width="2.52" height="0.8" fill="#7d5a7b"/><rect x="718.55" y="53.40" width="13.86" height="0.8" fill="#3a8072"/><rect x="733.04" y="53.40" width="3.78" height="0.8" fill="#7d5a7b"/><rect x="737.45" y="53.40" width="8.19" height="0.8" fill="#3a8072"/><rect x="715.40" y="55.29" width="13.23" height="0.8" fill="#4a6a3d"/><rect x="715.40" y="56.23" width="2.52" height="0.8" fill="#7d5a7b"/><rect x="718.55" y="56.23" width="4.41" height="0.8" fill="#3a8072"/><rect x="723.59" y="56.23" width="3.78" height="0.8" fill="#7d5a7b"/><rect x="728.00" y="56.23" width="8.19" height="0.8" fill="#3a8072"/><rect x="715.40" y="57.18" width="2.52" height="0.8" fill="#7d5a7b"/><rect x="718.55" y="57.18" width="3.15" height="0.8" fill="#3a8072"/><rect x="722.33" y="57.18" width="3.78" height="0.8" fill="#7d5a7b"/><rect x="726.74" y="57.18" width="6.93" height="0.8" fill="#3a8072"/><rect x="715.40" y="58.12" width="2.52" height="0.8" fill="#7d5a7b"/><rect x="718.55" y="58.12" width="3.78" height="0.8" fill="#3a8072"/><rect x="722.96" y="58.12" width="3.78" height="0.8" fill="#7d5a7b"/><rect x="727.37" y="58.12" width="7.56" height="0.8" fill="#3a8072"/><rect x="715.40" y="59.07" width="2.52" height="0.8" fill="#7d5a7b"/><rect x="718.55" y="59.07" width="2.52" height="0.8" fill="#3a8072"/><rect x="721.70" y="59.07" width="3.78" height="0.8" fill="#7d5a7b"/><rect x="726.11" y="59.07" width="6.30" height="0.8" fill="#3a8072"/><rect x="715.40" y="60.01" width="2.52" height="0.8" fill="#7d5a7b"/><rect x="718.55" y="60.01" width="5.04" height="0.8" fill="#3a8072"/><rect x="724.22" y="60.01" width="3.78" height="0.8" fill="#7d5a7b"/><rect x="728.63" y="60.01" width="8.82" height="0.8" fill="#3a8072"/><rect x="715.40" y="60.95" width="2.52" height="0.8" fill="#7d5a7b"/><rect x="718.55" y="60.95" width="4.41" height="0.8" fill="#3a8072"/><rect x="723.59" y="60.95" width="3.78" height="0.8" fill="#7d5a7b"/><rect x="728.00" y="60.95" width="8.19" height="0.8" fill="#3a8072"/><rect x="715.40" y="61.90" width="2.52" height="0.8" fill="#7d5a7b"/><rect x="718.55" y="61.90" width="4.41" height="0.8" fill="#3a8072"/><rect x="723.59" y="61.90" width="3.78" height="0.8" fill="#7d5a7b"/><rect x="728.00" y="61.90" width="8.19" height="0.8" fill="#3a8072"/><rect x="715.40" y="64.73" width="3.15" height="0.8" fill="#3f6a93"/><rect x="719.18" y="64.73" width="8.19" height="0.8" fill="#3a8072"/><rect x="728.00" y="64.73" width="8.19" height="0.8" fill="#3a8072"/><rect x="717.92" y="65.68" width="2.52" height="0.8" fill="#7d5a7b"/><rect x="715.40" y="68.52" width="3.15" height="0.8" fill="#3f6a93"/><rect x="719.18" y="68.52" width="4.41" height="0.8" fill="#3a8072"/><rect x="724.22" y="68.52" width="1.89" height="0.8" fill="#3a8072"/><rect x="717.92" y="69.46" width="1.89" height="0.8" fill="#3f6a93"/><rect x="720.44" y="69.46" width="3.15" height="0.8" fill="#8a8a6c"/><rect x="724.22" y="69.46" width="2.52" height="0.8" fill="#66899e"/><rect x="720.44" y="70.41" width="1.26" height="0.8" fill="#66899e"/><rect x="723.59" y="70.41" width="8.19" height="0.8" fill="#3a8072"/><rect x="720.44" y="72.30" width="10.71" height="0.8" fill="#4a6a3d"/><rect x="720.44" y="73.24" width="1.26" height="0.8" fill="#66899e"/><rect x="722.33" y="73.24" width="6.30" height="0.8" fill="#8a8a6c"/><rect x="729.26" y="73.24" width="8.19" height="0.8" fill="#3a8072"/><rect x="738.08" y="73.24" width="2.52" height="0.8" fill="#66899e"/><rect x="741.23" y="73.24" width="5.67" height="0.8" fill="#8a5f4e"/><rect x="720.44" y="74.19" width="1.26" height="0.8" fill="#66899e"/><rect x="722.33" y="74.19" width="6.30" height="0.8" fill="#8a8a6c"/><rect x="729.26" y="74.19" width="6.93" height="0.8" fill="#3a8072"/><rect x="736.82" y="74.19" width="2.52" height="0.8" fill="#66899e"/><rect x="739.97" y="74.19" width="4.41" height="0.8" fill="#8a5f4e"/><rect x="720.44" y="75.13" width="1.26" height="0.8" fill="#66899e"/><rect x="722.33" y="75.13" width="6.30" height="0.8" fill="#8a8a6c"/><rect x="729.26" y="75.13" width="7.56" height="0.8" fill="#3a8072"/><rect x="737.45" y="75.13" width="2.52" height="0.8" fill="#66899e"/><rect x="740.60" y="75.13" width="5.04" height="0.8" fill="#8a5f4e"/><rect x="720.44" y="76.08" width="1.26" height="0.8" fill="#66899e"/><rect x="722.33" y="76.08" width="6.30" height="0.8" fill="#8a8a6c"/><rect x="729.26" y="76.08" width="6.30" height="0.8" fill="#3a8072"/><rect x="736.19" y="76.08" width="2.52" height="0.8" fill="#66899e"/><rect x="739.34" y="76.08" width="3.78" height="0.8" fill="#8a5f4e"/><rect x="720.44" y="77.02" width="1.26" height="0.8" fill="#66899e"/><rect x="722.33" y="77.02" width="6.30" height="0.8" fill="#8a8a6c"/><rect x="729.26" y="77.02" width="8.82" height="0.8" fill="#3a8072"/><rect x="738.71" y="77.02" width="2.52" height="0.8" fill="#66899e"/><rect x="741.86" y="77.02" width="6.30" height="0.8" fill="#8a5f4e"/><rect x="720.44" y="77.97" width="1.26" height="0.8" fill="#66899e"/><rect x="722.33" y="77.97" width="6.30" height="0.8" fill="#8a8a6c"/><rect x="729.26" y="77.97" width="8.19" height="0.8" fill="#3a8072"/><rect x="738.08" y="77.97" width="2.52" height="0.8" fill="#66899e"/><rect x="741.23" y="77.97" width="5.67" height="0.8" fill="#8a5f4e"/><rect x="720.44" y="78.91" width="1.26" height="0.8" fill="#66899e"/><rect x="722.33" y="78.91" width="6.30" height="0.8" fill="#8a8a6c"/><rect x="729.26" y="78.91" width="8.19" height="0.8" fill="#3a8072"/><rect x="738.08" y="78.91" width="2.52" height="0.8" fill="#66899e"/><rect x="741.23" y="78.91" width="5.67" height="0.8" fill="#8a5f4e"/><rect x="720.44" y="80.80" width="3.78" height="0.8" fill="#7d5a7b"/><rect x="724.85" y="80.80" width="1.26" height="0.8" fill="#66899e"/><rect x="715.40" y="83.64" width="1.26" height="0.8" fill="#7d5a7b"/><rect x="717.29" y="83.64" width="5.04" height="0.8" fill="#66899e"/><rect x="724.85" y="83.64" width="6.30" height="0.8" fill="#8a5f4e"/><rect x="717.92" y="84.58" width="4.41" height="0.8" fill="#3a8072"/><rect x="722.96" y="84.58" width="1.89" height="0.8" fill="#8a8a6c"/></svg>
<div class="" style="left:766.3px;top:52px;width:0.7px;height:287px;background:#2b2b2b;"></div>
<div class="" style="left:766.8px;top:101.3px;width:7.7px;height:1.5px;background:#9a9a9a;"></div>
<div class="" style="left:195px;top:339px;width:580px;height:1px;background:#2b2b2b;"></div>
<span id="t32" class="ui" style="left:206.8px;top:342.50px;line-height:13px;height:13px;font-size:6.55px;transform-origin:0 50%;transform:scaleX(0.8574);color:#9d9d9d">PROBLEMS</span>
<span id="t33" class="ui" style="left:252px;top:342.50px;line-height:13px;height:13px;font-size:6.55px;transform-origin:0 50%;transform:scaleX(0.8840);color:#9d9d9d">OUTPUT</span>
<span id="t34" class="ui" style="left:290.5px;top:342.50px;line-height:13px;height:13px;font-size:6.55px;transform-origin:0 50%;transform:scaleX(0.8753);color:#9d9d9d">DEBUG CONSOLE</span>
<svg class="ic" style="left:694.95px;top:344.55px;width:8.5px;height:8.5px;" viewBox="0 0 16 16"><path d="M8 2.500 V13.500 M2.500 8 H13.500" stroke="#c8c8c8" stroke-width="1.3"/></svg>
<svg class="ic" style="left:706.45px;top:346.25px;width:5.5px;height:5.5px;" viewBox="0 0 16 16"><path d="M2.5 5.5 L8 11 L13.5 5.5" stroke="#c5c5c5" stroke-width="1.6"/></svg>
<div style="left:719.45px;top:348.15px;width:1.3px;height:1.3px;border-radius:50%;background:#c8c8c8"></div>
<div style="left:721.75px;top:348.15px;width:1.3px;height:1.3px;border-radius:50%;background:#c8c8c8"></div>
<div style="left:724.05px;top:348.15px;width:1.3px;height:1.3px;border-radius:50%;background:#c8c8c8"></div>
<div class="" style="left:734px;top:343.5px;width:0.7px;height:10.5px;background:#4a4a4a;"></div>
<svg class="ic" style="left:741.35px;top:344.55px;width:8.5px;height:8.5px;" viewBox="0 0 16 16"><path d="M2.500 6 V3.500 Q2.500 2.500 3.500 2.500 H6 M10 2.500 H12.500 Q13.500 2.500 13.500 3.500 V6 M13.500 10 V12.500 Q13.500 13.500 12.500 13.500 H10 M6 13.500 H3.500 Q2.500 13.500 2.500 12.500 V10" stroke="#c8c8c8" stroke-width="1.3"/></svg>
<svg class="ic" style="left:756.80px;top:344.80px;width:8px;height:8px;" viewBox="0 0 16 16"><path d="M3 3 L13 13 M13 3 L3 13" stroke="#c8c8c8" stroke-width="1.4"/></svg>
<span class="term " style="left:206.75px;top:360.15px">PS C:\Users\Patrick John\Desktop\AIONYX-python&gt; &amp; </span>
<span class="term cy" style="right:235.39999999999998px;top:360.15px">"C:\Users\Patrick John\AppData\Local\Programs\Pyt</span>
<span class="term cy" style="left:206.75px;top:370.65px">hon\Python310\python.exe" "c:/Users/Patrick John/Desktop/AIONYX-p</span>
<span class="term cy" style="left:528.6px;top:370.65px">ython/main.py"</span>
<div class="" style="left:198.75px;top:380.2px;width:473px;height:0.8px;background:#101010;"></div>
<span class="term " style="left:206.75px;top:382.35px">[<span class="gr" style="position:static">INFO</span>   ] [Text        ] Provider: sdl2</span>
<span class="term " style="left:206.75px;top:392.69px">[<span class="gr" style="position:static">INFO</span>   ] [GL          ] Using the "OpenGL" graphics system</span>
<span class="term " style="left:206.75px;top:403.03px">[<span class="ye" style="position:static">WARNING</span>] Deprecated property "&lt;BooleanProperty name=allow_stretch&gt;" of obje</span>
<span class="term " style="right:236.0px;top:403.03px">ct "&lt;kivy.uix.image.Image object a</span>
<span class="term " style="left:206.75px;top:413.37px">t 0x00000225E7A29620&gt;" was accessed, it will be removed in a future version</span>
<span class="term " style="left:206.75px;top:423.71px">[<span class="ye" style="position:static">WARNING</span>] Deprecated property "&lt;BooleanProperty name=keep_ratio&gt;" of objec</span>
<span class="term " style="right:236.0px;top:423.71px">"&lt;kivy.uix.image.Image object at 0</span>
<span class="term " style="left:206.75px;top:434.05px">x00000225E7A29620&gt;" was accessed, it will be removed in a future version</span>
<span class="term " style="left:206.75px;top:444.39px">[<span class="gr" style="position:static">INFO</span>   ] [Base        ] Start application main loop</span>
<div style="left:206.75px;top:453.2px;width:4.5px;height:9.8px;border:0.8px solid #c8c8c8"></div>
<div class="" style="left:673px;top:357px;width:1px;height:106px;background:#242424;"></div>
<div class="" style="left:679.1px;top:372.3px;width:95.4px;height:12.4px;background:#37373d;"></div>
<svg class="ic" style="left:685.60px;top:361.60px;width:8.2px;height:8.2px;" viewBox="0 0 16 16"><rect x="1.800" y="2.500" width="12.400" height="11" rx="1.800" stroke="#cccccc" stroke-width="1.200"/><path d="M4.500 5.800 L7 8 L4.500 10.200 M8 10.800 H11" stroke="#cccccc" stroke-width="1.200"/></svg>
<span id="t35" class="ui" style="left:696.9px;top:359.30px;line-height:13px;height:13px;font-size:7.65px;transform-origin:0 50%;transform:scaleX(0.9749);">Python</span>
<svg class="ic" style="left:685.60px;top:374.60px;width:8.2px;height:8.2px;" viewBox="0 0 16 16"><rect x="1.800" y="2.500" width="12.400" height="11" rx="1.800" stroke="#cccccc" stroke-width="1.200"/><path d="M4.500 5.800 L7 8 L4.500 10.200 M8 10.800 H11" stroke="#cccccc" stroke-width="1.200"/></svg>
<span id="t36" class="ui" style="left:696.9px;top:372.40px;line-height:13px;height:13px;font-size:7.65px;transform-origin:0 50%;transform:scaleX(0.9749);">Python</span>
<div class="" style="left:775px;top:19px;width:1px;height:444px;background:#2b2b2b;"></div>
<div style="left:784.15px;top:28.15px;width:1.3px;height:1.3px;border-radius:50%;background:#c8c8c8"></div>
<div style="left:786.45px;top:28.15px;width:1.3px;height:1.3px;border-radius:50%;background:#c8c8c8"></div>
<div style="left:788.75px;top:28.15px;width:1.3px;height:1.3px;border-radius:50%;background:#c8c8c8"></div>
<svg class="ic" style="left:807.40px;top:24.30px;width:9px;height:9px;" viewBox="0 0 16 16"><path d="M8 2 V14 M2 8 H14" stroke="#d0d0d0" stroke-width="1.300"/></svg>
<svg class="ic" style="left:818.95px;top:26.25px;width:5.5px;height:5.5px;" viewBox="0 0 16 16"><path d="M2.5 5.5 L8 11 L13.5 5.5" stroke="#c5c5c5" stroke-width="1.6"/></svg>
<svg style="left:829.8px;top:23.6px;width:10.4px;height:10.4px;stroke:#d0d0d0;fill:none;stroke-width:1.9;stroke-linejoin:round" viewBox="0 0 24 24"><circle cx="12" cy="12" r="2.600"/><path d="M10.41 2.74 L13.59 2.74 L14.23 5.26 L15.19 5.66 L17.43 4.32 L19.68 6.57 L18.34 8.81 L18.74 9.77 L21.26 10.41 L21.26 13.59 L18.74 14.23 L18.34 15.19 L19.68 17.43 L17.43 19.68 L15.19 18.34 L14.23 18.74 L13.59 21.26 L10.41 21.26 L9.77 18.74 L8.81 18.34 L6.57 19.68 L4.32 17.43 L5.66 15.19 L5.26 14.23 L2.74 13.59 L2.74 10.41 L5.26 9.77 L5.66 8.81 L4.32 6.57 L6.57 4.32 L8.81 5.66 L9.77 5.26 Z"/></svg>
<div style="left:847.55px;top:28.15px;width:1.3px;height:1.3px;border-radius:50%;background:#c8c8c8"></div>
<div style="left:849.85px;top:28.15px;width:1.3px;height:1.3px;border-radius:50%;background:#c8c8c8"></div>
<div style="left:852.15px;top:28.15px;width:1.3px;height:1.3px;border-radius:50%;background:#c8c8c8"></div>
<div class="" style="left:861.4px;top:23.5px;width:0.7px;height:10.5px;background:#4a4a4a;"></div>
<svg class="ic" style="left:867.80px;top:23.40px;width:10.8px;height:10.8px;" viewBox="0 0 16 16"><path d="M2.500 6 V3.500 Q2.500 2.500 3.500 2.500 H6 M10 2.500 H12.500 Q13.500 2.500 13.500 3.500 V6 M13.500 10 V12.500 Q13.500 13.500 12.500 13.500 H10 M6 13.500 H3.500 Q2.500 13.500 2.500 12.500 V10" stroke="#d0d0d0" stroke-width="1.100"/></svg>
<svg class="ic" style="left:884.40px;top:24.80px;width:8px;height:8px;" viewBox="0 0 16 16"><path d="M3 3 L13 13 M13 3 L3 13" stroke="#d0d0d0" stroke-width="1.400"/></svg>
<span id="t37" class="ui b" style="left:786.5px;top:39.40px;line-height:13px;height:13px;font-size:6.6px;transform-origin:0 50%;transform:scaleX(0.9550);color:#d8d8d8">SESSIONS</span>
<svg class="ic" style="left:837.00px;top:40.20px;width:10.8px;height:10.8px;" viewBox="0 0 16 16"><path d="M12.500 8 A4.600 4.600 0 1 1 10.500 4.200 M10.800 1.800 V4.600 H8" stroke="#d0d0d0" stroke-width="1.100"/></svg>
<svg class="ic" style="left:852.20px;top:40.20px;width:10.8px;height:10.8px;" viewBox="0 0 16 16"><circle cx="7" cy="7" r="4" stroke="#d0d0d0" stroke-width="1.100"/><path d="M10 10 L13.500 13.500" stroke="#d0d0d0" stroke-width="1.100"/></svg>
<svg class="ic" style="left:867.50px;top:40.20px;width:10.8px;height:10.8px;" viewBox="0 0 16 16"><path d="M2.500 3 H13.500 L9.300 8.300 V13 H6.700 V8.300 Z" stroke="#d0d0d0" stroke-width="1.100"/></svg>
<svg class="ic" style="left:883.00px;top:40.20px;width:10.8px;height:10.8px;" viewBox="0 0 16 16"><rect x="2.500" y="2.500" width="11" height="11" rx="1.800" stroke="#d0d0d0" stroke-width="1.100"/><path d="M9.500 2.500 V13.500" stroke="#d0d0d0" stroke-width="1.100"/></svg>
<div class="" style="left:782.1px;top:384.9px;width:113px;height:60.8px;background:#2a2a2a;border-radius:4.5px;"></div>
<div class="" style="left:786.5px;top:389.3px;width:46.1px;height:11px;background:transparent;border:0.7px dashed #444;border-radius:2.5px;"></div>
<svg class="ic" style="left:788.30px;top:392.00px;width:6px;height:6px;" viewBox="0 0 16 16"><path d="M8 2 V14 M2 8 H14" stroke="#9a9a9a" stroke-width="1.600"/></svg>
<svg style="left:797.90px;top:391.70px;width:6.6px;height:6.6px" viewBox="0 0 24 24"><g fill="#519aba"><rect x="7" y="1.5" width="10" height="21" rx="3.6"/><rect x="1.5" y="7" width="21" height="10" rx="3.6"/></g><path d="M7 11.300 H12.700 M11.300 12.700 H17" stroke="#1a1a1a" stroke-width="0.900" fill="none" opacity="0.55"/><circle cx="10" cy="4.600" r="1.100" fill="#1a1a1a" opacity="0.7"/><circle cx="14" cy="19.400" r="1.100" fill="#1a1a1a" opacity="0.7"/></svg>
<span id="t38" class="ui" style="left:807.8px;top:388.70px;line-height:13px;height:13px;font-size:6.6px;transform-origin:0 50%;transform:scaleX(0.9483);font-style:italic;color:#c0c0c0">main.py</span>
<span id="t39" class="ui" style="left:788px;top:407.40px;line-height:13px;height:13px;font-size:7.65px;transform-origin:0 50%;transform:scaleX(1.0070);color:#858585">Describe what to build</span>
<svg class="ic" style="left:787.75px;top:430.95px;width:8.5px;height:8.5px;" viewBox="0 0 16 16"><path d="M8 2 V14 M2 8 H14" stroke="#c8c8c8" stroke-width="1.300"/></svg>
<svg class="ic" style="left:803.30px;top:431.40px;width:8px;height:8px;" viewBox="0 0 16 16"><circle cx="8" cy="8" r="5.500" stroke="#c0c0c0" stroke-width="1.300"/><path d="M10 4.500 L6 11.500" stroke="#c0c0c0" stroke-width="1.300"/></svg>
<span id="t40" class="ui" style="left:820.5px;top:428.90px;line-height:13px;height:13px;font-size:6.6px;transform-origin:0 50%;transform:scaleX(1.0163);color:#c8c8c8">Auto</span>
<svg class="ic" style="left:837.10px;top:433.10px;width:5px;height:5px;" viewBox="0 0 16 16"><path d="M2.5 5.5 L8 11 L13.5 5.5" stroke="#a0a0a0" stroke-width="1.6"/></svg>
<svg class="ic" style="left:850.95px;top:430.95px;width:8.5px;height:8.5px;" viewBox="0 0 16 16"><path d="M2 5 H14 M2 11 H14" stroke="#c8c8c8" stroke-width="1.300"/><circle cx="10" cy="5" r="1.700" fill="#2a2a2a" stroke="#c8c8c8" stroke-width="1.200"/><circle cx="6" cy="11" r="1.700" fill="#2a2a2a" stroke="#c8c8c8" stroke-width="1.200"/></svg>
<svg class="ic" style="left:880.35px;top:430.95px;width:8.5px;height:8.5px;" viewBox="0 0 16 16"><path d="M8 14 V2.500 M3.500 7 L8 2.500 L12.500 7" stroke="#5a5a5a" stroke-width="1.300"/></svg>
<svg class="ic" style="left:787.55px;top:450.75px;width:7.5px;height:7.5px;" viewBox="0 0 16 16"><rect x="2" y="2.500" width="12" height="8.500" rx="1.500" stroke="#c0c0c0" stroke-width="1.400"/><path d="M5.500 13.500 H10.500" stroke="#c0c0c0" stroke-width="1.400"/></svg>
<span id="t41" class="ui" style="left:799.2px;top:448.10px;line-height:13px;height:13px;font-size:6.6px;transform-origin:0 50%;transform:scaleX(0.8395);color:#c8c8c8">L...</span>
<svg class="ic" style="left:811.40px;top:452.30px;width:5px;height:5px;" viewBox="0 0 16 16"><path d="M2.5 5.5 L8 11 L13.5 5.5" stroke="#a0a0a0" stroke-width="1.6"/></svg>
<svg class="ic" style="left:825.05px;top:450.75px;width:7.5px;height:7.5px;" viewBox="0 0 16 16"><path d="M8 1.800 L13.500 3.800 V8 Q13.500 12 8 14.300 Q2.500 12 2.500 8 V3.800 Z" stroke="#c0c0c0" stroke-width="1.300"/><circle cx="8" cy="7.500" r="1.500" stroke="#c0c0c0" stroke-width="1.100"/></svg>
<span id="t42" class="ui" style="left:836.5px;top:448.10px;line-height:13px;height:13px;font-size:6.6px;transform-origin:0 50%;transform:scaleX(0.9699);color:#c8c8c8">Default App...</span>
<svg class="ic" style="left:880.10px;top:452.30px;width:5px;height:5px;" viewBox="0 0 16 16"><path d="M2.5 5.5 L8 11 L13.5 5.5" stroke="#a0a0a0" stroke-width="1.6"/></svg>
<div class="" style="left:2px;top:463px;width:900px;height:1px;background:#272727;"></div>
<svg style="left:0;top:460px;width:30px;height:16px" viewBox="0 460 30 16"><path d="M9.600 469.100 L12.100 471.100 L9.600 473.100 M16 465.400 L13.600 467.400 L16 469.400" stroke="#d0d0d0" stroke-width="0.900" fill="none" stroke-linecap="round" stroke-linejoin="round"/></svg>
<svg class="ic" style="left:26.70px;top:465.00px;width:9.4px;height:9.4px;" viewBox="0 0 16 16"><circle cx="8" cy="8" r="6.400" stroke="#d0d0d0" stroke-width="1.200"/><path d="M5.700 5.700 L10.300 10.300 M10.300 5.700 L5.700 10.300" stroke="#d0d0d0" stroke-width="1.200"/></svg>
<span id="t43" class="ui" style="left:38px;top:464.60px;line-height:13px;height:13px;font-size:7.1px;">0</span>
<svg class="ic" style="left:43.80px;top:464.70px;width:9.4px;height:9.4px;" viewBox="0 0 16 16"><path d="M8 1.800 L15 14 H1 Z" stroke="#d0d0d0" stroke-width="1.200"/><path d="M8 6.500 V10 M8 11.800 V12" stroke="#d0d0d0" stroke-width="1.200"/></svg>
<span id="t44" class="ui" style="left:55.2px;top:464.60px;line-height:13px;height:13px;font-size:7.1px;">0</span>
<span id="t45" class="ui" style="left:68.5px;top:464.60px;line-height:13px;height:13px;font-size:7.1px;transform-origin:0 50%;transform:scaleX(0.9475);">KvLang Python</span>
<span id="t46" class="ui" style="left:123.7px;top:464.60px;line-height:13px;height:13px;font-size:7.1px;transform-origin:0 50%;transform:scaleX(0.9641);">Run Main.py</span>
<span id="t47" class="ui" style="left:537.8px;top:464.60px;line-height:13px;height:13px;font-size:7.1px;transform-origin:0 50%;transform:scaleX(0.9539);">Ln 12, Col 1</span>
<span id="t48" class="ui" style="left:583.3px;top:464.60px;line-height:13px;height:13px;font-size:7.1px;transform-origin:0 50%;transform:scaleX(0.9156);">Spaces: 4</span>
<span id="t49" class="ui" style="left:620.7px;top:464.60px;line-height:13px;height:13px;font-size:7.1px;transform-origin:0 50%;transform:scaleX(0.9946);">UTF-8</span>
<span id="t50" class="ui" style="left:648.7px;top:464.60px;line-height:13px;height:13px;font-size:7.1px;transform-origin:0 50%;transform:scaleX(0.8472);">CRLF</span>
<span id="t51" class="ui" style="left:674.7px;top:464.30px;line-height:13px;height:13px;font-size:7.1px;">{ }</span>
<span id="t52" class="ui" style="left:687px;top:464.60px;line-height:13px;height:13px;font-size:7.1px;transform-origin:0 50%;transform:scaleX(0.9822);">Python</span>
<div class="" style="left:713px;top:463px;width:55px;height:13px;background:#2d3037;"></div>
<svg class="ic" style="left:717.25px;top:466.85px;width:8.5px;height:8.5px;" viewBox="0 0 16 16"><path d="M8 3 Q3.500 3 3 6.500 Q1.800 7.500 2 9.500 Q2.200 12 5.500 12.500 H8 M8 3 Q12.500 3 13 6.500 Q14.200 7.500 14 9" stroke="#d0d0d0" stroke-width="1.200"/><circle cx="11.800" cy="11.800" r="2.300" stroke="#d0d0d0" stroke-width="1.100"/><path d="M6 6.500 V8 M10 6.500 V8" stroke="#d0d0d0" stroke-width="1.100"/></svg>
<span id="t53" class="ui" style="left:729.6px;top:464.60px;line-height:13px;height:13px;font-size:7.1px;transform-origin:0 50%;transform:scaleX(0.9787);color:#d8d8d8">Signed out</span>
<span id="t54" class="ui" style="left:772.4px;top:464.60px;line-height:13px;height:13px;font-size:7.1px;transform-origin:0 50%;transform:scaleX(0.9902);">Python 3.10 (64-bit)</span>
<svg class="ic" style="left:842.95px;top:466.85px;width:8.5px;height:8.5px;" viewBox="0 0 16 16"><circle cx="8" cy="8" r="1.300" fill="#c8c8c8" stroke="none"/><path d="M5.300 5.300 Q3 8 5.300 10.700 M10.700 5.300 Q13 8 10.700 10.700 M3.300 3.500 Q0 8 3.300 12.500 M12.700 3.500 Q16 8 12.700 12.500" stroke="#c8c8c8" stroke-width="1.100"/></svg>
<span id="t55" class="ui" style="left:854.7px;top:464.60px;line-height:13px;height:13px;font-size:7.1px;transform-origin:0 50%;transform:scaleX(0.9119);">Go Live</span>
<svg class="ic" style="left:887.35px;top:466.85px;width:8.5px;height:8.5px;" viewBox="0 0 16 16"><path d="M8 2 Q4.300 2 4.300 6 V9.500 L3 11.500 H13 L11.700 9.500 V6 Q11.700 2 8 2 Z M6.700 13.300 Q8 14.500 9.300 13.300" stroke="#c8c8c8" stroke-width="1.200"/></svg>
<div class="" style="left:2px;top:476px;width:900px;height:25px;background:#1f1f1f;"></div>
<div class="" style="left:2px;top:476px;width:900px;height:1px;background:#2c2c2c;"></div>
<svg style="left:0;top:476px;width:60px;height:25px" viewBox="0 476 60 25"><defs><linearGradient id="mg" x1="0" y1="0" x2="0" y2="1"><stop offset="0" stop-color="#fbb03b"/><stop offset="1" stop-color="#f7851a"/></linearGradient></defs><path d="M14.300 491.500 C16 497.500 22 498.200 25.500 494.700 C27.800 492.200 28.500 489 27.600 486 C26.500 489.500 24 492.500 20.500 492.600 C18 492.600 16 492.200 14.300 491.500 Z" fill="url(#mg)"/></svg>
<svg style="left:0;top:476px;width:60px;height:25px" viewBox="0 476 60 25"><circle cx="25" cy="484.400" r="4.700" fill="#f5a0b4"/><text x="25" y="486.700" text-anchor="middle" font-family="Liberation Sans, sans-serif" font-size="6.400" fill="#3b3b3b">1</text></svg>
<span id="t56" class="ui" style="left:32.4px;top:478.90px;line-height:13px;height:13px;font-size:7.2px;transform-origin:0 50%;transform:scaleX(0.9152);color:#f4f4f4;-webkit-text-stroke:0.2px">24°C</span>
<span id="t57" class="ui" style="left:32.4px;top:488.40px;line-height:13px;height:13px;font-size:7.2px;transform-origin:0 50%;transform:scaleX(0.9018);color:#c4c4c4;-webkit-text-stroke:0.15px">Clear</span>
<div style="left:0;top:0.8px;width:0;height:0">
<svg style="left:250.2px;top:483.2px;width:13.4px;height:13.4px" viewBox="0 0 13.400 13.400"><defs><linearGradient id="wg" x1="0" y1="0" x2="1" y2="1"><stop offset="0" stop-color="#5fd0f8"/><stop offset="1" stop-color="#1a8fe0"/></linearGradient></defs><g fill="url(#wg)"><rect x="0" y="0" width="6.300" height="6.300" rx="0.500"/><rect x="7.100" y="0" width="6.300" height="6.300" rx="0.500"/><rect x="0" y="7.100" width="6.300" height="6.300" rx="0.500"/><rect x="7.100" y="7.100" width="6.300" height="6.300" rx="0.500"/></g></svg>
<div class="" style="left:272.2px;top:480.3px;width:129px;height:19px;background:#303030;border-radius:9.5px;border:0.7px solid #3d3d3d;"></div>
<svg class="ic" style="left:278.40px;top:484.80px;width:9.6px;height:9.6px;" viewBox="0 0 16 16"><circle cx="6.800" cy="6.800" r="4.600" stroke="#e6e6e6" stroke-width="1.500"/><path d="M10.200 10.200 L14.200 14.200" stroke="#e6e6e6" stroke-width="1.600"/></svg>
<span id="t58" class="ui" style="left:293.6px;top:483.40px;line-height:13px;height:13px;font-size:7.4px;transform-origin:0 50%;transform:scaleX(1.0119);color:#d0d0d0">Search</span>
<svg style="left:369.4px;top:482.6px;width:28.6px;height:14.4px" viewBox="0 0 28.600 14.400"><rect x="0" y="0" width="28.600" height="14.400" rx="7.200" fill="#d9d6a0"/><path d="M2 12 Q4 3 8 6 Q10 1 14 5 Q17 1 20 6 Q24 3 26.500 11 Q14 16 2 12 Z" fill="#3f7a3a"/><path d="M6 10 L8 5 L10 10 Z M18.500 10 L20.500 5 L22.500 10 Z" fill="#f4f4e8"/><path d="M12 11 L14.300 4 L16.600 11 Z" fill="#2f5f2f"/></svg>
<svg style="left:408.6px;top:482.6px;width:15px;height:13.900px" viewBox="0 0 14 13"><rect x="0.500" y="4" width="8.500" height="8" rx="1" fill="#7a7a7a"/><rect x="4.500" y="0.800" width="9" height="8.500" rx="1" fill="#e6e6e6"/></svg>
<svg style="left:434px;top:482.5px;width:14px;height:14px" viewBox="0 0 14 14"><circle cx="10.800" cy="3.500" r="1.700" fill="#7b83eb"/><circle cx="6.800" cy="2.800" r="2.200" fill="#5059c9"/><rect x="8.500" y="5.800" width="5" height="5.500" rx="1.500" fill="#7b83eb"/><rect x="3.200" y="5.500" width="7.300" height="7.500" rx="1.800" fill="#5059c9"/><rect x="0.500" y="6.500" width="6" height="6" rx="0.800" fill="#4048b8"/><path d="M2 8 H5 M3.500 8 V11.500" stroke="#fff" stroke-width="0.900"/></svg>
<svg style="left:459.4px;top:482px;width:15.4px;height:15.4px" viewBox="0 0 24 24"><defs><linearGradient id="eg" x1="0" y1="0" x2="1" y2="1"><stop offset="0" stop-color="#35c1f1"/><stop offset="1" stop-color="#0c59a4"/></linearGradient><linearGradient id="eg2" x1="0" y1="0" x2="1" y2="0"><stop offset="0" stop-color="#1b9de2"/><stop offset="1" stop-color="#54d67a"/></linearGradient></defs><circle cx="12" cy="12" r="10.500" fill="url(#eg)"/><path d="M12 1.500 A10.500 10.500 0 0 1 22.500 12 C22.500 15.500 19.500 16.800 17 16.800 C14.500 16.800 13 15.800 13.800 14.600 C14.800 13 14.300 10.500 11.800 9.500 C8.300 8.200 4.500 10 2 14 C0.500 7 5.500 1.500 12 1.500 Z" fill="url(#eg2)"/><path d="M9.500 11 C8.500 13.500 9 17 12.500 19.500 C15 21 18.500 20.500 20.800 17.800 C17 20 11 18 9.500 11 Z" fill="#0a3f7d"/></svg>
<svg style="left:484.8px;top:483px;width:15px;height:13.5px" viewBox="0 0 15 13.500"><path d="M0.500 1.800 Q0.500 0.800 1.500 0.800 H5.300 L6.800 2.300 H13.500 Q14.500 2.300 14.500 3.300 V11.500 H0.500 Z" fill="#e8a920"/><rect x="0.500" y="4" width="14" height="8.500" rx="1" fill="#fcd354"/><rect x="4.500" y="9.700" width="6" height="2.800" fill="#3b8fd9"/></svg>
<div class="" style="left:490.3px;top:499.3px;width:4px;height:1.2px;background:#8a8a8a;border-radius:1px"></div>
<svg style="left:511.3px;top:482.3px;width:14px;height:14.500px" viewBox="0 0 14 14.500"><path d="M4.300 4 V3 Q4.300 1.200 6 1.200 H8 Q9.700 1.200 9.700 3 V4" stroke="#3f9ae6" stroke-width="1.100" fill="none"/><rect x="0.800" y="3.500" width="12.400" height="10.500" rx="1.500" fill="#f2f2f2"/><rect x="4" y="6" width="2.700" height="2.700" fill="#f25022"/><rect x="7.300" y="6" width="2.700" height="2.700" fill="#7fba00"/><rect x="4" y="9.300" width="2.700" height="2.700" fill="#00a4ef"/><rect x="7.300" y="9.300" width="2.700" height="2.700" fill="#ffb900"/></svg>
<svg style="left:536.4px;top:482.5px;width:14.200px;height:14.200px" viewBox="0 0 13.400 13.400"><rect width="13.400" height="13.400" rx="0.800" fill="#0d55f0"/><path d="M4.400 3 L6.700 4.500 L4.400 6 L2.100 4.500 Z M9 3 L11.300 4.500 L9 6 L6.700 4.500 Z M4.400 6.100 L6.700 7.600 L4.400 9.100 L2.100 7.600 Z M9 6.100 L11.300 7.600 L9 9.100 L6.700 7.600 Z M6.700 8.300 L8.600 9.600 L6.700 10.900 L4.800 9.600 Z" fill="#fff"/></svg>
<svg style="left:562.5px;top:483px;width:14px;height:14px" viewBox="0 0 14 14"><circle cx="7" cy="7" r="6.800" fill="#e33b2e"/><path d="M7 7 L1.100 3.600 A6.800 6.800 0 0 0 7 13.800 L10 8.700 Z" fill="#2da94f"/><path d="M7 7 L10 8.700 L7 13.800 A6.800 6.800 0 0 0 12.900 3.600 H7 Z" fill="#fbc116"/><circle cx="7" cy="7" r="3.100" fill="#fff"/><circle cx="7" cy="7" r="2.400" fill="#3f86f4"/></svg>
<div style="left:570.7px;top:479.2px;width:8.400px;height:8.400px;border-radius:50%;background:#3c6e3a;color:#e8d9a0;font-size:5.600px;line-height:8.400px;text-align:center;font-weight:bold">P</div>
<div class="" style="left:567.5px;top:499.3px;width:4px;height:1.2px;background:#8a8a8a;border-radius:1px"></div>
<div style="left:588px;top:482.8px;width:14.200px;height:14.200px;border-radius:50%;background:#1877f2"></div>
<span style="left:592.300px;top:483.800px;font-size:13.500px;line-height:14px;font-weight:bold;color:#fff">f</span>
<div class="" style="left:593.1px;top:499.3px;width:4px;height:1.2px;background:#8a8a8a;border-radius:1px"></div>
<svg style="left:612.5px;top:481.5px;width:16.600px;height:16.600px" viewBox="0 0 16 16"><path d="M11.500 1 L5 7.300 L2.300 5.200 L1 5.800 L3.600 8 L1 10.200 L2.300 10.800 L5 8.700 L11.500 15 L15 13.400 V2.600 Z M11.500 4.800 V11.200 L7.400 8 Z" fill="#2f9fe8" fill-rule="evenodd"/></svg>
<div class="" style="left:618.7px;top:499.3px;width:4px;height:1.2px;background:#8a8a8a;border-radius:1px"></div>
<div class="" style="left:635px;top:478.2px;width:23.6px;height:21.6px;background:#2b2b2b;border-radius:2.500px;border:0.600px solid #323232;"></div>
<svg style="left:640.3px;top:482.5px;width:15px;height:14.500px" viewBox="0 0 15 14.500"><rect x="0.300" y="0.300" width="12.400" height="10.400" rx="0.800" fill="#3c4148"/><path d="M1.800 4 H5 M1.800 5.800 H4" stroke="#8a9098" stroke-width="0.600"/><rect x="0.300" y="0.300" width="12.400" height="1.600" fill="#2f8ff0"/></svg>
<svg style="left:644.8px;top:486.3px;width:10.500px;height:10.500px" viewBox="0 0 24 24"><path fill="#3b78a8" d="M11.900 1C8 1 8.300 2.700 8.300 2.700v2.900h3.700v.9H5.200S2 6.100 2 11.900s2.800 5.600 2.800 5.600h1.900v-2.700s-.1-2.800 2.800-2.800h4.800s2.700 0 2.700-2.600V4S17.400 1 11.900 1z"/><path fill="#f7cf3f" transform="rotate(180 12 12)" d="M11.900 1C8 1 8.300 2.700 8.300 2.700v2.900h3.700v.9H5.200S2 6.100 2 11.900s2.800 5.600 2.800 5.600h1.900v-2.700s-.1-2.800 2.800-2.800h4.800s2.700 0 2.700-2.600V4S17.400 1 11.900 1z"/></svg>
<div class="" style="left:641.2px;top:499px;width:11px;height:2px;background:#4cc2ff;border-radius:1px"></div>
</div>
<svg class="ic" style="left:786.70px;top:485.80px;width:8.4px;height:8.4px;" viewBox="0 0 16 16"><path d="M3 10.500 L8 5.500 L13 10.500" stroke="#f0f0f0" stroke-width="1.900"/></svg>
<svg class="ic" style="left:803.90px;top:484.10px;width:11.4px;height:11.4px;" viewBox="0 0 16 16"><rect x="1.500" y="2.500" width="10" height="8.500" rx="1" stroke="#ececec" stroke-width="1.200"/><path d="M4.500 13.800 H9.500 M7 11 V13.800" stroke="#ececec" stroke-width="1.200"/><rect x="9.500" y="8.200" width="4.300" height="5.800" rx="0.700" fill="#1f1f1f" stroke="#ececec" stroke-width="1"/><circle cx="13" cy="3.200" r="1.700" fill="#1f1f1f" stroke="#ececec" stroke-width="0.900"/></svg>
<svg class="ic" style="left:818.40px;top:485.00px;width:9px;height:9px;" viewBox="0 0 16 16"><path d="M2.500 6 H5 L8 3.300 V12.700 L5 10 H2.500 Z" fill="#e6e6e6" stroke="#e6e6e6" stroke-width="0.800"/><path d="M10 5.800 Q11.500 8 10 10.200" stroke="#e6e6e6" stroke-width="1.100"/><path d="M11.800 4 Q14.300 8 11.800 12" stroke="#777" stroke-width="1.100"/></svg>
<svg style="left:832.6px;top:484.4px;width:13px;height:10px" viewBox="0 0 13 10"><rect x="0.600" y="3.200" width="11" height="5.800" rx="1.800" fill="#6cc070" stroke="#e4f2e2" stroke-width="0.900"/><rect x="11.800" y="5" width="0.900" height="2.300" fill="#e4f2e2"/><path d="M6.200 0.300 V4.800 M4.600 3.400 L6.200 5.200 L7.800 3.400" stroke="#f4fff2" stroke-width="1.100" fill="none"/></svg>
<span id="t59" class="ui" style="left:862.4px;top:479.40px;line-height:13px;height:13px;font-size:7.2px;transform-origin:0 50%;transform:scaleX(0.9410);color:#f4f4f4;-webkit-text-stroke:0.15px">12:04 am</span>
<span id="t60" class="ui" style="left:854.6px;top:487.80px;line-height:13px;height:13px;font-size:7.2px;transform-origin:0 50%;transform:scaleX(1.0004);color:#f4f4f4;-webkit-text-stroke:0.15px">21/03/2026</span>
<div id="kivy" style="left:303px;top:21px;width:225.7px;height:439.7px;border-radius:4px;background:#a0bef0;overflow:hidden;box-shadow:0 2px 11px 2px rgba(0,0,0,0.5),inset -1px 0 0 rgba(205,225,255,0.55)">
<div style="left:0;top:0;width:226px;height:17.300px;background:#f3f3f3"></div>
<svg style="left:4.800px;top:4.400px;width:8.600px;height:8.600px" viewBox="0 0 16 16"><circle cx="8" cy="8" r="8" fill="#2b2b2b"/><path d="M3.500 5.500 L5.300 9.500 L7.200 6 L8.500 9.500 L12.500 5.500 L10.500 11 H5 Z" fill="#f3f3f3"/></svg>
<span style="left:16.800px;top:3.100px;font-size:7.100px;line-height:13px;color:#1a1a1a">Main</span>
<svg class="ic" style="left:152.50px;top:4.10px;width:8px;height:8px;" viewBox="0 0 16 16"><path d="M3 8 H13" stroke="#111" stroke-width="1"/></svg>
<svg class="ic" style="left:179.70px;top:4.40px;width:8px;height:8px;" viewBox="0 0 16 16"><rect x="3.200" y="3.200" width="9.600" height="9.600" rx="1" stroke="#222" stroke-width="1.200"/></svg>
<svg class="ic" style="left:207.30px;top:4.40px;width:8px;height:8px;" viewBox="0 0 16 16"><path d="M3 3 L13 13 M13 3 L3 13" stroke="#222" stroke-width="1.200"/></svg>
<svg style="left:0;top:17px;width:225px;height:422px" viewBox="0 17 225 422">
<path d="M81 99 H142.3 L148.3 126.9 A76.8 76.8 0 0 0 75.39999999999998 126.9 Z" fill="#202022"/>
<path d="M80.89999999999998 281.9 H142.60000000000002 L148.3 254.39999999999998 A76.8 76.8 0 0 1 75.39999999999998 254.39999999999998 Z" fill="#202022"/>
<circle cx="112.0" cy="190.55" r="61.15" fill="#202022"/>
<line x1="112.00" y1="135.25" x2="112.00" y2="132.15" stroke="#0c0c0d" stroke-width="1.1"/>
<line x1="117.98" y1="133.66" x2="118.10" y2="132.47" stroke="#0c0c0d" stroke-width="0.35"/>
<line x1="123.89" y1="134.60" x2="124.14" y2="133.43" stroke="#0c0c0d" stroke-width="0.35"/>
<line x1="129.68" y1="136.15" x2="130.05" y2="135.01" stroke="#0c0c0d" stroke-width="0.35"/>
<line x1="135.27" y1="138.30" x2="135.75" y2="137.20" stroke="#0c0c0d" stroke-width="0.35"/>
<line x1="139.65" y1="142.66" x2="141.20" y2="139.97" stroke="#0c0c0d" stroke-width="1.1"/>
<line x1="145.62" y1="144.27" x2="146.33" y2="143.30" stroke="#0c0c0d" stroke-width="0.35"/>
<line x1="150.27" y1="148.04" x2="151.08" y2="147.15" stroke="#0c0c0d" stroke-width="0.35"/>
<line x1="154.51" y1="152.28" x2="155.40" y2="151.47" stroke="#0c0c0d" stroke-width="0.35"/>
<line x1="158.28" y1="156.93" x2="159.25" y2="156.22" stroke="#0c0c0d" stroke-width="0.35"/>
<line x1="159.89" y1="162.90" x2="162.58" y2="161.35" stroke="#0c0c0d" stroke-width="1.1"/>
<line x1="164.25" y1="167.28" x2="165.35" y2="166.80" stroke="#0c0c0d" stroke-width="0.35"/>
<line x1="166.40" y1="172.87" x2="167.54" y2="172.50" stroke="#0c0c0d" stroke-width="0.35"/>
<line x1="167.95" y1="178.66" x2="169.12" y2="178.41" stroke="#0c0c0d" stroke-width="0.35"/>
<line x1="168.89" y1="184.57" x2="170.08" y2="184.45" stroke="#0c0c0d" stroke-width="0.35"/>
<line x1="167.30" y1="190.55" x2="170.40" y2="190.55" stroke="#0c0c0d" stroke-width="1.1"/>
<line x1="168.89" y1="196.53" x2="170.08" y2="196.65" stroke="#0c0c0d" stroke-width="0.35"/>
<line x1="167.95" y1="202.44" x2="169.12" y2="202.69" stroke="#0c0c0d" stroke-width="0.35"/>
<line x1="166.40" y1="208.23" x2="167.54" y2="208.60" stroke="#0c0c0d" stroke-width="0.35"/>
<line x1="164.25" y1="213.82" x2="165.35" y2="214.30" stroke="#0c0c0d" stroke-width="0.35"/>
<line x1="159.89" y1="218.20" x2="162.58" y2="219.75" stroke="#0c0c0d" stroke-width="1.1"/>
<line x1="158.28" y1="224.17" x2="159.25" y2="224.88" stroke="#0c0c0d" stroke-width="0.35"/>
<line x1="154.51" y1="228.82" x2="155.40" y2="229.63" stroke="#0c0c0d" stroke-width="0.35"/>
<line x1="150.27" y1="233.06" x2="151.08" y2="233.95" stroke="#0c0c0d" stroke-width="0.35"/>
<line x1="145.62" y1="236.83" x2="146.33" y2="237.80" stroke="#0c0c0d" stroke-width="0.35"/>
<line x1="139.65" y1="238.44" x2="141.20" y2="241.13" stroke="#0c0c0d" stroke-width="1.1"/>
<line x1="135.27" y1="242.80" x2="135.75" y2="243.90" stroke="#0c0c0d" stroke-width="0.35"/>
<line x1="129.68" y1="244.95" x2="130.05" y2="246.09" stroke="#0c0c0d" stroke-width="0.35"/>
<line x1="123.89" y1="246.50" x2="124.14" y2="247.67" stroke="#0c0c0d" stroke-width="0.35"/>
<line x1="117.98" y1="247.44" x2="118.10" y2="248.63" stroke="#0c0c0d" stroke-width="0.35"/>
<line x1="112.00" y1="245.85" x2="112.00" y2="248.95" stroke="#0c0c0d" stroke-width="1.1"/>
<line x1="106.02" y1="247.44" x2="105.90" y2="248.63" stroke="#0c0c0d" stroke-width="0.35"/>
<line x1="100.11" y1="246.50" x2="99.86" y2="247.67" stroke="#0c0c0d" stroke-width="0.35"/>
<line x1="94.32" y1="244.95" x2="93.95" y2="246.09" stroke="#0c0c0d" stroke-width="0.35"/>
<line x1="88.73" y1="242.80" x2="88.25" y2="243.90" stroke="#0c0c0d" stroke-width="0.35"/>
<line x1="84.35" y1="238.44" x2="82.80" y2="241.13" stroke="#0c0c0d" stroke-width="1.1"/>
<line x1="78.38" y1="236.83" x2="77.67" y2="237.80" stroke="#0c0c0d" stroke-width="0.35"/>
<line x1="73.73" y1="233.06" x2="72.92" y2="233.95" stroke="#0c0c0d" stroke-width="0.35"/>
<line x1="69.49" y1="228.82" x2="68.60" y2="229.63" stroke="#0c0c0d" stroke-width="0.35"/>
<line x1="65.72" y1="224.17" x2="64.75" y2="224.88" stroke="#0c0c0d" stroke-width="0.35"/>
<line x1="64.11" y1="218.20" x2="61.42" y2="219.75" stroke="#0c0c0d" stroke-width="1.1"/>
<line x1="59.75" y1="213.82" x2="58.65" y2="214.30" stroke="#0c0c0d" stroke-width="0.35"/>
<line x1="57.60" y1="208.23" x2="56.46" y2="208.60" stroke="#0c0c0d" stroke-width="0.35"/>
<line x1="56.05" y1="202.44" x2="54.88" y2="202.69" stroke="#0c0c0d" stroke-width="0.35"/>
<line x1="55.11" y1="196.53" x2="53.92" y2="196.65" stroke="#0c0c0d" stroke-width="0.35"/>
<line x1="56.70" y1="190.55" x2="53.60" y2="190.55" stroke="#0c0c0d" stroke-width="1.1"/>
<line x1="55.11" y1="184.57" x2="53.92" y2="184.45" stroke="#0c0c0d" stroke-width="0.35"/>
<line x1="56.05" y1="178.66" x2="54.88" y2="178.41" stroke="#0c0c0d" stroke-width="0.35"/>
<line x1="57.60" y1="172.87" x2="56.46" y2="172.50" stroke="#0c0c0d" stroke-width="0.35"/>
<line x1="59.75" y1="167.28" x2="58.65" y2="166.80" stroke="#0c0c0d" stroke-width="0.35"/>
<line x1="64.11" y1="162.90" x2="61.42" y2="161.35" stroke="#0c0c0d" stroke-width="1.1"/>
<line x1="65.72" y1="156.93" x2="64.75" y2="156.22" stroke="#0c0c0d" stroke-width="0.35"/>
<line x1="69.49" y1="152.28" x2="68.60" y2="151.47" stroke="#0c0c0d" stroke-width="0.35"/>
<line x1="73.73" y1="148.04" x2="72.92" y2="147.15" stroke="#0c0c0d" stroke-width="0.35"/>
<line x1="78.38" y1="144.27" x2="77.67" y2="143.30" stroke="#0c0c0d" stroke-width="0.35"/>
<line x1="84.35" y1="142.66" x2="82.80" y2="139.97" stroke="#0c0c0d" stroke-width="1.1"/>
<line x1="88.73" y1="138.30" x2="88.25" y2="137.20" stroke="#0c0c0d" stroke-width="0.35"/>
<line x1="94.32" y1="136.15" x2="93.95" y2="135.01" stroke="#0c0c0d" stroke-width="0.35"/>
<line x1="100.11" y1="134.60" x2="99.86" y2="133.43" stroke="#0c0c0d" stroke-width="0.35"/>
<line x1="106.02" y1="133.66" x2="105.90" y2="132.47" stroke="#0c0c0d" stroke-width="0.35"/>
<line x1="116.24" y1="193.20" x2="87.83" y2="175.45" stroke="#050506" stroke-width="2.7" stroke-linecap="round"/>
<line x1="107.56" y1="192.86" x2="148.81" y2="171.39" stroke="#050506" stroke-width="1.4" stroke-linecap="round"/>
<line x1="109.19" y1="177.86" x2="122.93" y2="239.85" stroke="#050506" stroke-width="0.55" stroke-linecap="round"/>
<text x="112.0" y="160.2" text-anchor="middle" font-family="Liberation Sans, sans-serif" font-size="3.400" fill="#8197c2" textLength="47.100" lengthAdjust="spacingAndGlyphs">WHERE EVERY MOMENT</text>
<text x="112.0" y="165" text-anchor="middle" font-family="Liberation Sans, sans-serif" font-size="3.400" fill="#8197c2" textLength="35.200" lengthAdjust="spacingAndGlyphs">HOLDS MEANING</text>
<text x="66.80000000000001" y="195.7" font-family="Liberation Sans, sans-serif" font-size="15.400" fill="#a6c2f2" stroke="#202022" stroke-width="0.280" textLength="90.500" lengthAdjust="spacingAndGlyphs">AIONYX</text>
<text x="112.0" y="220.4" text-anchor="middle" font-family="Liberation Sans, sans-serif" font-size="3.200" fill="#8fa6d3" textLength="21.600" lengthAdjust="spacingAndGlyphs">ESTD. 2026</text>
<text x="113.4" y="323.3" text-anchor="middle" font-family="Liberation Sans, sans-serif" font-weight="bold" font-size="22.800" fill="#0a0a0a" stroke="#0a0a0a" stroke-width="1.700" stroke-linejoin="miter" textLength="88.200" lengthAdjust="spacingAndGlyphs">AIONYX</text>
</svg>
</div>
</div>
</body></html>
